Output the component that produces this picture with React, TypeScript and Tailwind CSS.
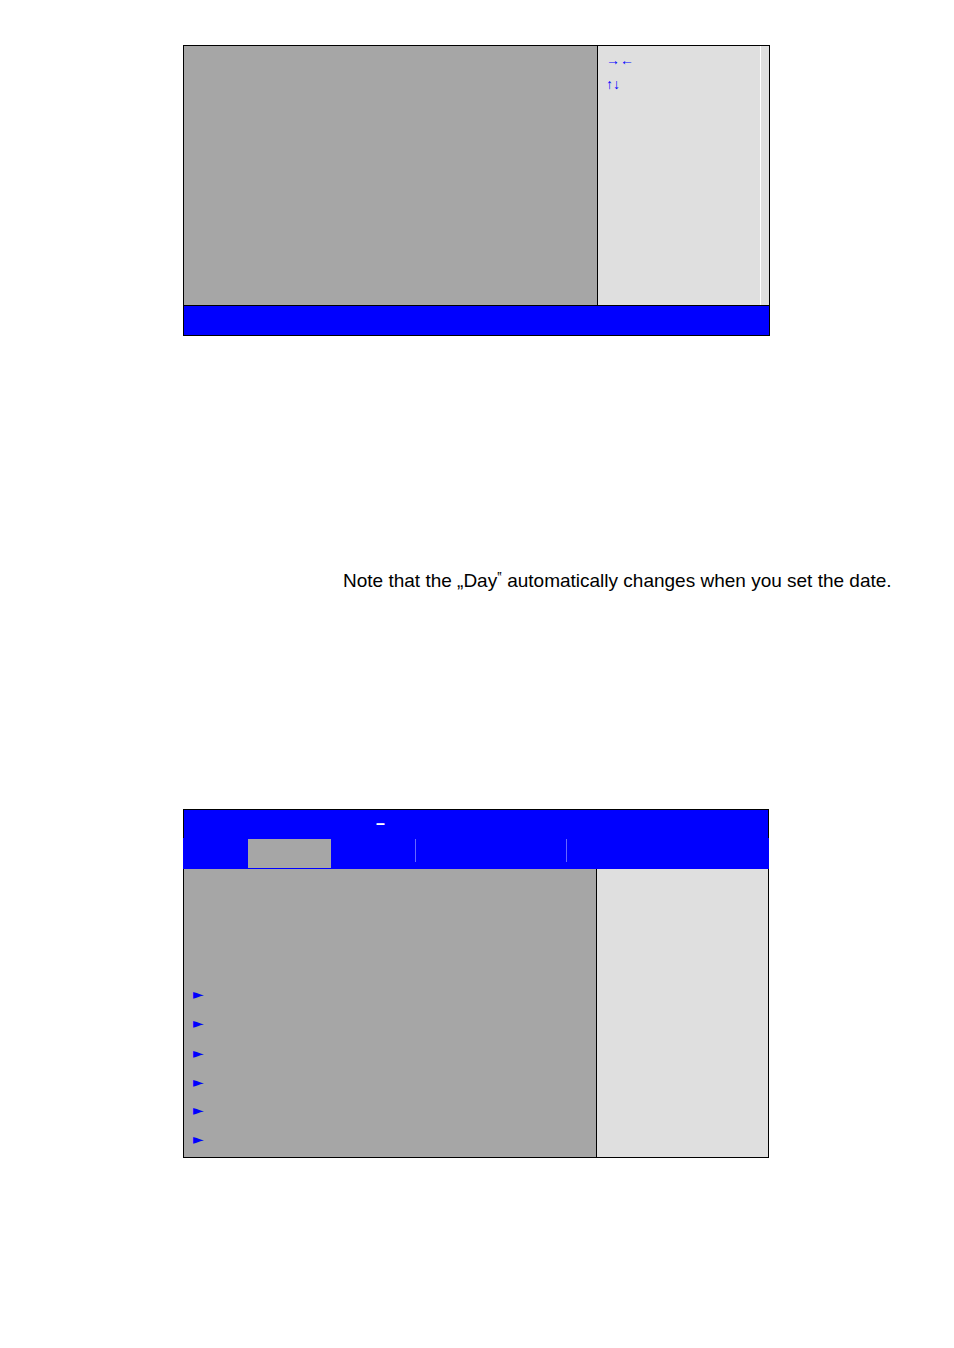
const menuRows = ['h-[29px]', 'h-[30px]', 'h-[29px]', 'h-[28px]', 'h-[29px]', 'h-[32px]'];

function KeyHelpPanel() {
  return (
    <section className="border border-black bg-[#a6a6a6]">
      <div className="flex h-[259px]">
        <div className="flex-1" />
        <aside className="flex w-[172px] border-l border-black bg-[#dfdfdf]">
          <div className="flex-1 border-r border-white pl-2 pt-0.5 text-[14px] leading-6 text-[#0000ff]">
            <p>→←</p>
            <p>↑↓</p>
          </div>
          <div className="w-2" />
        </aside>
      </div>
      <footer className="h-[30px] border-t border-black bg-[#0000ff]" />
    </section>
  );
}

function SetupPanel() {
  return (
    <section className="mr-px">
      <header className="h-[29px] border-x border-t border-black bg-[#0000ff] pl-[192px] text-[16px] font-bold leading-7 text-white">
        –
      </header>
      <nav className="flex h-[31px] items-start bg-[#0000ff] pl-[65px] pt-px">
        <div className="h-[29px] w-[83px] bg-[#a6a6a6]" />
        <div className="h-[23px] w-[85px] border-r border-[#6666ff]" />
        <div className="h-[23px] w-[151px] border-r border-[#6666ff]" />
      </nav>
      <div className="flex border-x border-b border-black bg-[#a6a6a6]">
        <ul className="flex-1 pl-[9px] pt-[111px] font-['DejaVu_Sans',sans-serif] text-[14px] leading-[29px] text-[#0000ff]">
          {menuRows.map((height, index) => (
            <li key={index} className={height}>►</li>
          ))}
        </ul>
        <aside className="w-[172px] border-l border-black bg-[#dfdfdf]" />
      </div>
    </section>
  );
}

export default function App() {
  return (
    <div className="min-h-screen bg-white pt-[45px] font-['Liberation_Sans',Arial,sans-serif] text-black">
      <main className="pl-[183px] pr-[184px]">
        <KeyHelpPanel />
        <div className="-mr-[160px] h-[473px] pl-[160px] pt-[233px] text-[19px] leading-6">
          <p>
            Note that the „Day<span className="align-text-top text-[14px] leading-none">‟</span> automatically changes when you set the date.
          </p>
        </div>
        <SetupPanel />
      </main>
    </div>
  );
}
